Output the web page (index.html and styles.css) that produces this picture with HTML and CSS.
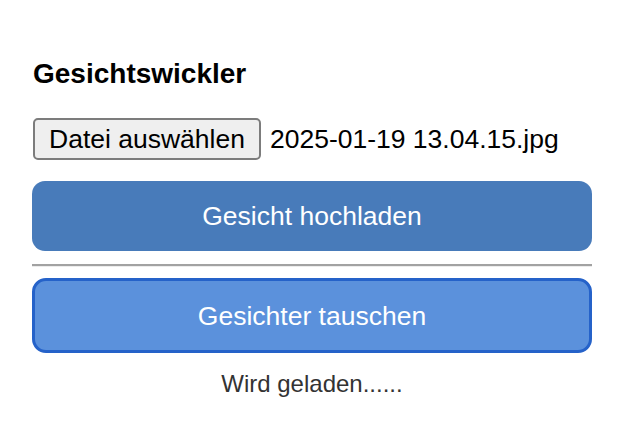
FILE: index.html
```html
<!DOCTYPE html>
<html lang="de">
<head>
<meta charset="utf-8">
<title>Gesichtswickler</title>
<link rel="stylesheet" href="styles.css">
</head>
<body>
<main class="app">
  <h1 class="title">Gesichtswickler</h1>
  <div class="file-row">
    <button class="file-btn" type="button">Datei auswählen</button>
    <span class="file-name">2025-01-19 13.04.15.jpg</span>
  </div>
  <button class="btn btn-upload" type="button">Gesicht hochladen</button>
  <hr class="divider">
  <button class="btn btn-swap" type="button">Gesichter tauschen</button>
  <p class="status">Wird geladen......</p>
</main>
</body>
</html>
```

FILE: styles.css
```css
html, body {
  margin: 0;
  padding: 0;
  background: #ffffff;
}

body {
  font-family: "Liberation Sans", Arial, sans-serif;
  color: #000;
}

.app {
  width: 560px;
  padding: 0 32px;
  display: flex;
  flex-direction: column;
}

.title {
  margin: 58px 0 0 1px;
  font-size: 28px;
  line-height: 32px;
  font-weight: bold;
}

.file-row {
  margin-top: 28px;
  display: flex;
  align-items: center;
  gap: 9px;
  padding-left: 1px;
}

.file-btn {
  height: 42px;
  padding: 0 14px;
  border: 2px solid #7c7c7c;
  border-radius: 5px;
  background: #efefef;
  font-family: "Liberation Sans", Arial, sans-serif;
  font-size: 26.5px;
  line-height: 30px;
  color: #000;
}

.file-name {
  font-size: 26.5px;
  line-height: 30px;
}

.btn {
  width: 560px;
  font-family: "Liberation Sans", Arial, sans-serif;
  font-size: 26.5px;
  line-height: 30px;
  color: #ffffff;
  text-align: center;
}

.btn-upload {
  margin-top: 21px;
  height: 70px;
  border: none;
  border-radius: 13px;
  background: #487bba;
}

.divider {
  margin: 13px 0 0 0;
  height: 0;
  border: none;
  border-top: 2px solid #a2a2a2;
  border-bottom: 1px solid #ececec;
}

.btn-swap {
  margin-top: 11px;
  height: 75px;
  border: 3px solid #2562c9;
  border-radius: 14px;
  background: #5b91dc;
}

.status {
  margin: 17px 0 0 0;
  font-size: 24px;
  line-height: 28px;
  color: #333333;
  text-align: center;
}
```
